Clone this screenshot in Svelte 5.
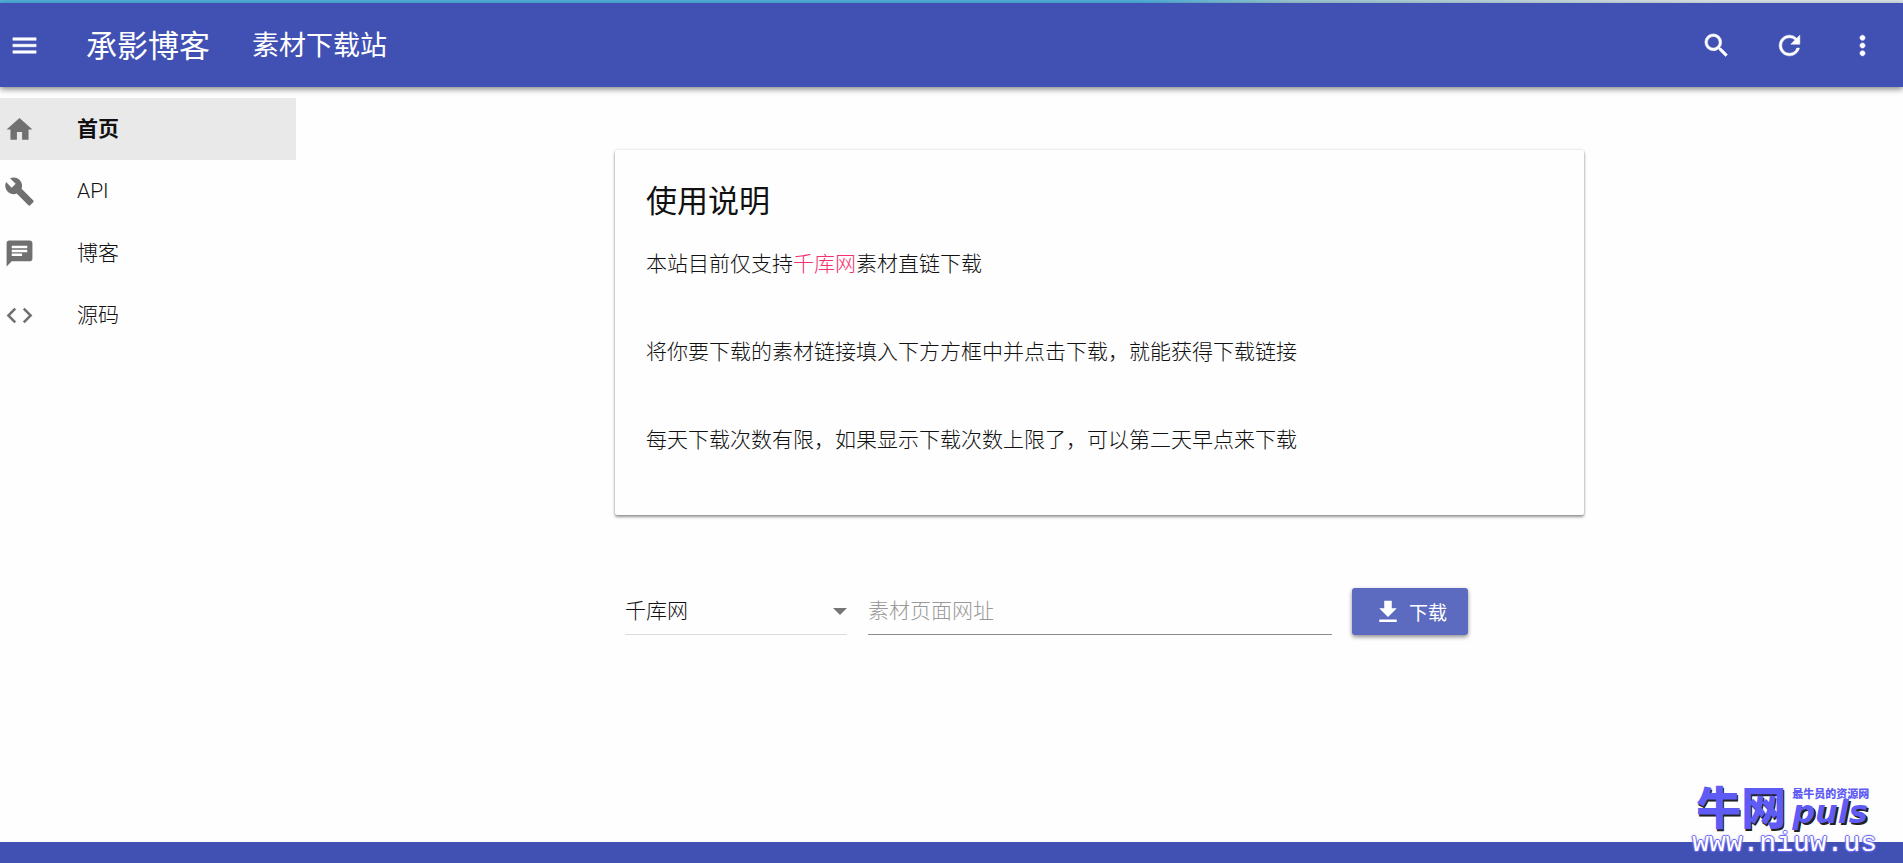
<script lang="ts">
  const links = [
    { icon: 'home', label: '首页' },
    { icon: 'build', label: 'API' },
    { icon: 'chat', label: '博客' },
    { icon: 'code', label: '源码' },
  ];

  const sites = ['千库网'];

  const paths: Record<string, string> = {
    menu: 'M3 18h18v-2H3v2zm0-5h18v-2H3v2zm0-7v2h18V6H3z',
    search: 'M15.5 14h-.79l-.28-.27A6.47 6.47 0 0 0 16 9.5 6.5 6.5 0 1 0 9.5 16c1.61 0 3.09-.59 4.23-1.57l.27.28v.79l5 4.99L20.49 19l-4.99-5zm-6 0C7.01 14 5 11.99 5 9.5S7.01 5 9.5 5 14 7.01 14 9.5 11.99 14 9.5 14z',
    refresh: 'M17.65 6.35A7.96 7.96 0 0 0 12 4c-4.42 0-7.99 3.58-7.99 8s3.57 8 7.99 8c3.73 0 6.84-2.55 7.73-6h-2.08A5.99 5.99 0 0 1 12 18c-3.31 0-6-2.69-6-6s2.69-6 6-6c1.66 0 3.14.69 4.22 1.78L13 11h7V4l-2.35 2.35z',
    more: 'M12 8c1.1 0 2-.9 2-2s-.9-2-2-2-2 .9-2 2 .9 2 2 2zm0 2c-1.1 0-2 .9-2 2s.9 2 2 2 2-.9 2-2-.9-2-2-2zm0 6c-1.1 0-2 .9-2 2s.9 2 2 2 2-.9 2-2-.9-2-2-2z',
    home: 'M10 20v-6h4v6h5v-8h3L12 3 2 12h3v8z',
    build: 'M22.7 19l-9.1-9.1c.9-2.3.4-5-1.5-6.9-2-2-5-2.4-7.4-1.3L9 6 6 9 1.6 4.7C.4 7.1.9 10.1 2.9 12.1c1.9 1.9 4.6 2.4 6.9 1.5l9.1 9.1c.4.4 1 .4 1.4 0l2.3-2.3c.5-.4.5-1.1.1-1.4z',
    chat: 'M20 2H4c-1.1 0-1.99.9-1.99 2L2 22l4-4h14c1.1 0 2-.9 2-2V4c0-1.1-.9-2-2-2zM6 9h12v2H6V9zm8 5H6v-2h8v2zm4-6H6V6h12v2z',
    code: 'M9.4 16.6L4.8 12l4.6-4.6L8 6l-6 6 6 6 1.4-1.4zm5.2 0l4.6-4.6-4.6-4.6L16 6l6 6-6 6-1.4-1.4z',
    download: 'M19 9h-4V3H9v6H5l7 7 7-7zM5 18v2h14v-2H5z',
  };

  let active = $state(0);
  let site = $state('千库网');
  let url = $state('');
</script>

{#snippet icon(name: string)}
  <svg class="icon" viewBox="0 0 24 24" aria-hidden="true"><path d={paths[name]} /></svg>
{/snippet}

<div class="page">
  <div class="progress"></div>
  <header class="toolbar">
    <button class="icon-btn menu" aria-label="menu">{@render icon('menu')}</button>
    <a class="brand" href="#home">承影博客</a>
    <a class="title" href="#home">素材下载站</a>
    <div class="spacer"></div>
    <button class="icon-btn" aria-label="search">{@render icon('search')}</button>
    <button class="icon-btn" aria-label="refresh">{@render icon('refresh')}</button>
    <button class="icon-btn" aria-label="more">{@render icon('more')}</button>
  </header>

  <div class="body">
    <nav class="drawer">
      {#each links as link, i}
        <a class="item" class:active={active === i} href="#{link.icon}" onclick={() => (active = i)}>
          {@render icon(link.icon)}
          <span>{link.label}</span>
        </a>
      {/each}
    </nav>

    <main>
      <section class="card">
        <h1>使用说明</h1>
        <p>本站目前仅支持<a href="#qianku">千库网</a>素材直链下载</p>
        <p>将你要下载的素材链接填入下方方框中并点击下载，就能获得下载链接</p>
        <p>每天下载次数有限，如果显示下载次数上限了，可以第二天早点来下载</p>
      </section>

      <form class="form" onsubmit={(e) => e.preventDefault()}>
        <div class="select">
          <select aria-label="site" bind:value={site}>
            {#each sites as name}
              <option>{name}</option>
            {/each}
          </select>
        </div>
        <input type="text" aria-label="url" placeholder="素材页面网址" bind:value={url} />
        <button class="download">{@render icon('download')}下载</button>
      </form>
    </main>
  </div>

  <footer></footer>

  <div class="mark">
    <div class="mark-logo">
      <span class="mark-name">牛网</span>
      <div class="mark-side">
        <span class="mark-tag">最牛员的资源网</span>
        <span class="mark-plus">puls</span>
      </div>
    </div>
    <div class="mark-url">www.niuw.us</div>
  </div>
</div>

<style>
  :global(body) {
    background: #fefefe;
  }
  .page {
    position: relative;
    display: flex;
    flex-direction: column;
    min-height: 100vh;
    color: #111;
    font-family: Roboto, "Noto Sans CJK SC", sans-serif;
    font-size: 21px;
    font-weight: 300;
  }
  a {
    color: inherit;
    text-decoration: none;
  }
  button {
    border: 0;
    background: none;
    color: inherit;
    font: inherit;
    cursor: pointer;
  }
  .icon {
    width: 31px;
    height: 31px;
    fill: currentColor;
    flex-shrink: 0;
  }

  .progress {
    height: 3px;
    background: linear-gradient(90deg, #4fb0dc 60%, #9cc8d4 68%, #dbe3e8 90%);
  }
  .toolbar {
    display: flex;
    align-items: center;
    height: 84px;
    padding-right: 4px;
    background: #4151b3;
    color: #fff;
    font-weight: 400;
    box-shadow: 0 2px 6px rgba(0, 0, 0, 0.5);
  }
  .toolbar .icon {
    stroke: currentColor;
    stroke-width: 0.4;
  }
  .icon-btn {
    display: flex;
    align-items: center;
    justify-content: center;
    width: 73px;
    height: 62px;
    padding: 0;
  }
  .icon-btn.menu {
    width: 48px;
  }
  .brand,
  .title {
    padding-bottom: 3px;
  }
  .brand {
    margin-left: 38px;
    font-size: 31px;
  }
  .title {
    margin-left: 42px;
    font-size: 27px;
  }
  .spacer {
    flex: 1;
  }

  .body {
    display: flex;
    flex: 1;
  }
  .drawer {
    width: 296px;
    padding-top: 11px;
    flex-shrink: 0;
  }
  .item {
    display: flex;
    align-items: center;
    gap: 42px;
    height: 62px;
    padding-left: 4px;
  }
  .item span {
    line-height: 24px;
  }
  .item .icon {
    color: #707070;
  }
  .item.active {
    background: #e9e9e9;
    font-weight: 700;
  }

  main {
    flex: 1;
    padding: 63px 20px 0;
  }
  .card {
    box-sizing: border-box;
    max-width: 969px;
    margin: 0 auto;
    padding: 28px 31px 32px;
    border-radius: 2px;
    background: #fefefe;
    box-shadow: 0 2px 3px rgba(0, 0, 0, 0.4), 0 0 3px rgba(0, 0, 0, 0.15);
  }
  h1 {
    margin: 0;
    font-size: 31px;
    font-weight: 400;
    line-height: 48px;
  }
  p {
    margin: 0 0 52px;
    line-height: 36px;
  }
  h1 + p {
    margin-top: 20px;
  }
  p:last-child {
    margin-bottom: 25px;
  }
  p a {
    color: #f5306f;
  }

  .form {
    display: flex;
    align-items: flex-end;
    box-sizing: border-box;
    max-width: 969px;
    margin: 73px auto 0;
    padding-left: 10px;
  }
  .select {
    position: relative;
    width: 222px;
    margin-right: 21px;
  }
  .select::after {
    content: "";
    position: absolute;
    top: 20px;
    right: 0;
    border: 7px solid transparent;
    border-top-color: #757575;
    border-bottom: 0;
    pointer-events: none;
  }
  select,
  input {
    box-sizing: border-box;
    height: 47px;
    border: 0;
    border-radius: 0;
    outline: 0;
    background: transparent;
    color: inherit;
    font: inherit;
  }
  select {
    width: 100%;
    padding: 0;
    border-bottom: 1px solid #dcdcdc;
    appearance: none;
  }
  input {
    width: 464px;
    padding: 0;
    border-bottom: 1px solid #8c8c8c;
  }
  input::placeholder {
    color: #999;
  }
  .download {
    display: flex;
    align-items: center;
    justify-content: center;
    width: 116px;
    height: 47px;
    margin-left: 20px;
    padding: 0;
    border-radius: 3px;
    background: #5c6bc0;
    color: #fff;
    font-size: 19px;
    font-weight: 400;
    box-shadow: 0 2px 4px rgba(0, 0, 0, 0.45);
  }
  .download .icon {
    width: 30px;
    height: 30px;
    margin-right: 6px;
  }

  footer {
    height: 21px;
    background: #4151b3;
  }

  /* site watermark, floats over the footer */
  .mark {
    position: absolute;
    right: 26px;
    bottom: 6px;
    color: #5f5cf5;
    font-weight: 900;
  }
  .mark-logo {
    display: flex;
    gap: 6px;
    padding-left: 4px;
  }
  .mark-name {
    font-size: 45px;
    line-height: 42px;
    text-shadow: 1px 2px #222;
  }
  .mark-side {
    display: flex;
    flex-direction: column;
  }
  .mark-tag {
    font-size: 11px;
    line-height: 12px;
  }
  .mark-plus {
    font: italic 700 32px/22px "DejaVu Sans", sans-serif;
    text-shadow: 2px 2px #222;
  }
  .mark-url {
    color: #fff;
    font: 28px/26px "Liberation Mono", monospace;
    text-shadow: 1px 0 #6f6cf0, -1px 0 #6f6cf0, 0 1px #6f6cf0, 0 -1px #6f6cf0, 0 0 3px #6f6cf0;
  }
</style>
